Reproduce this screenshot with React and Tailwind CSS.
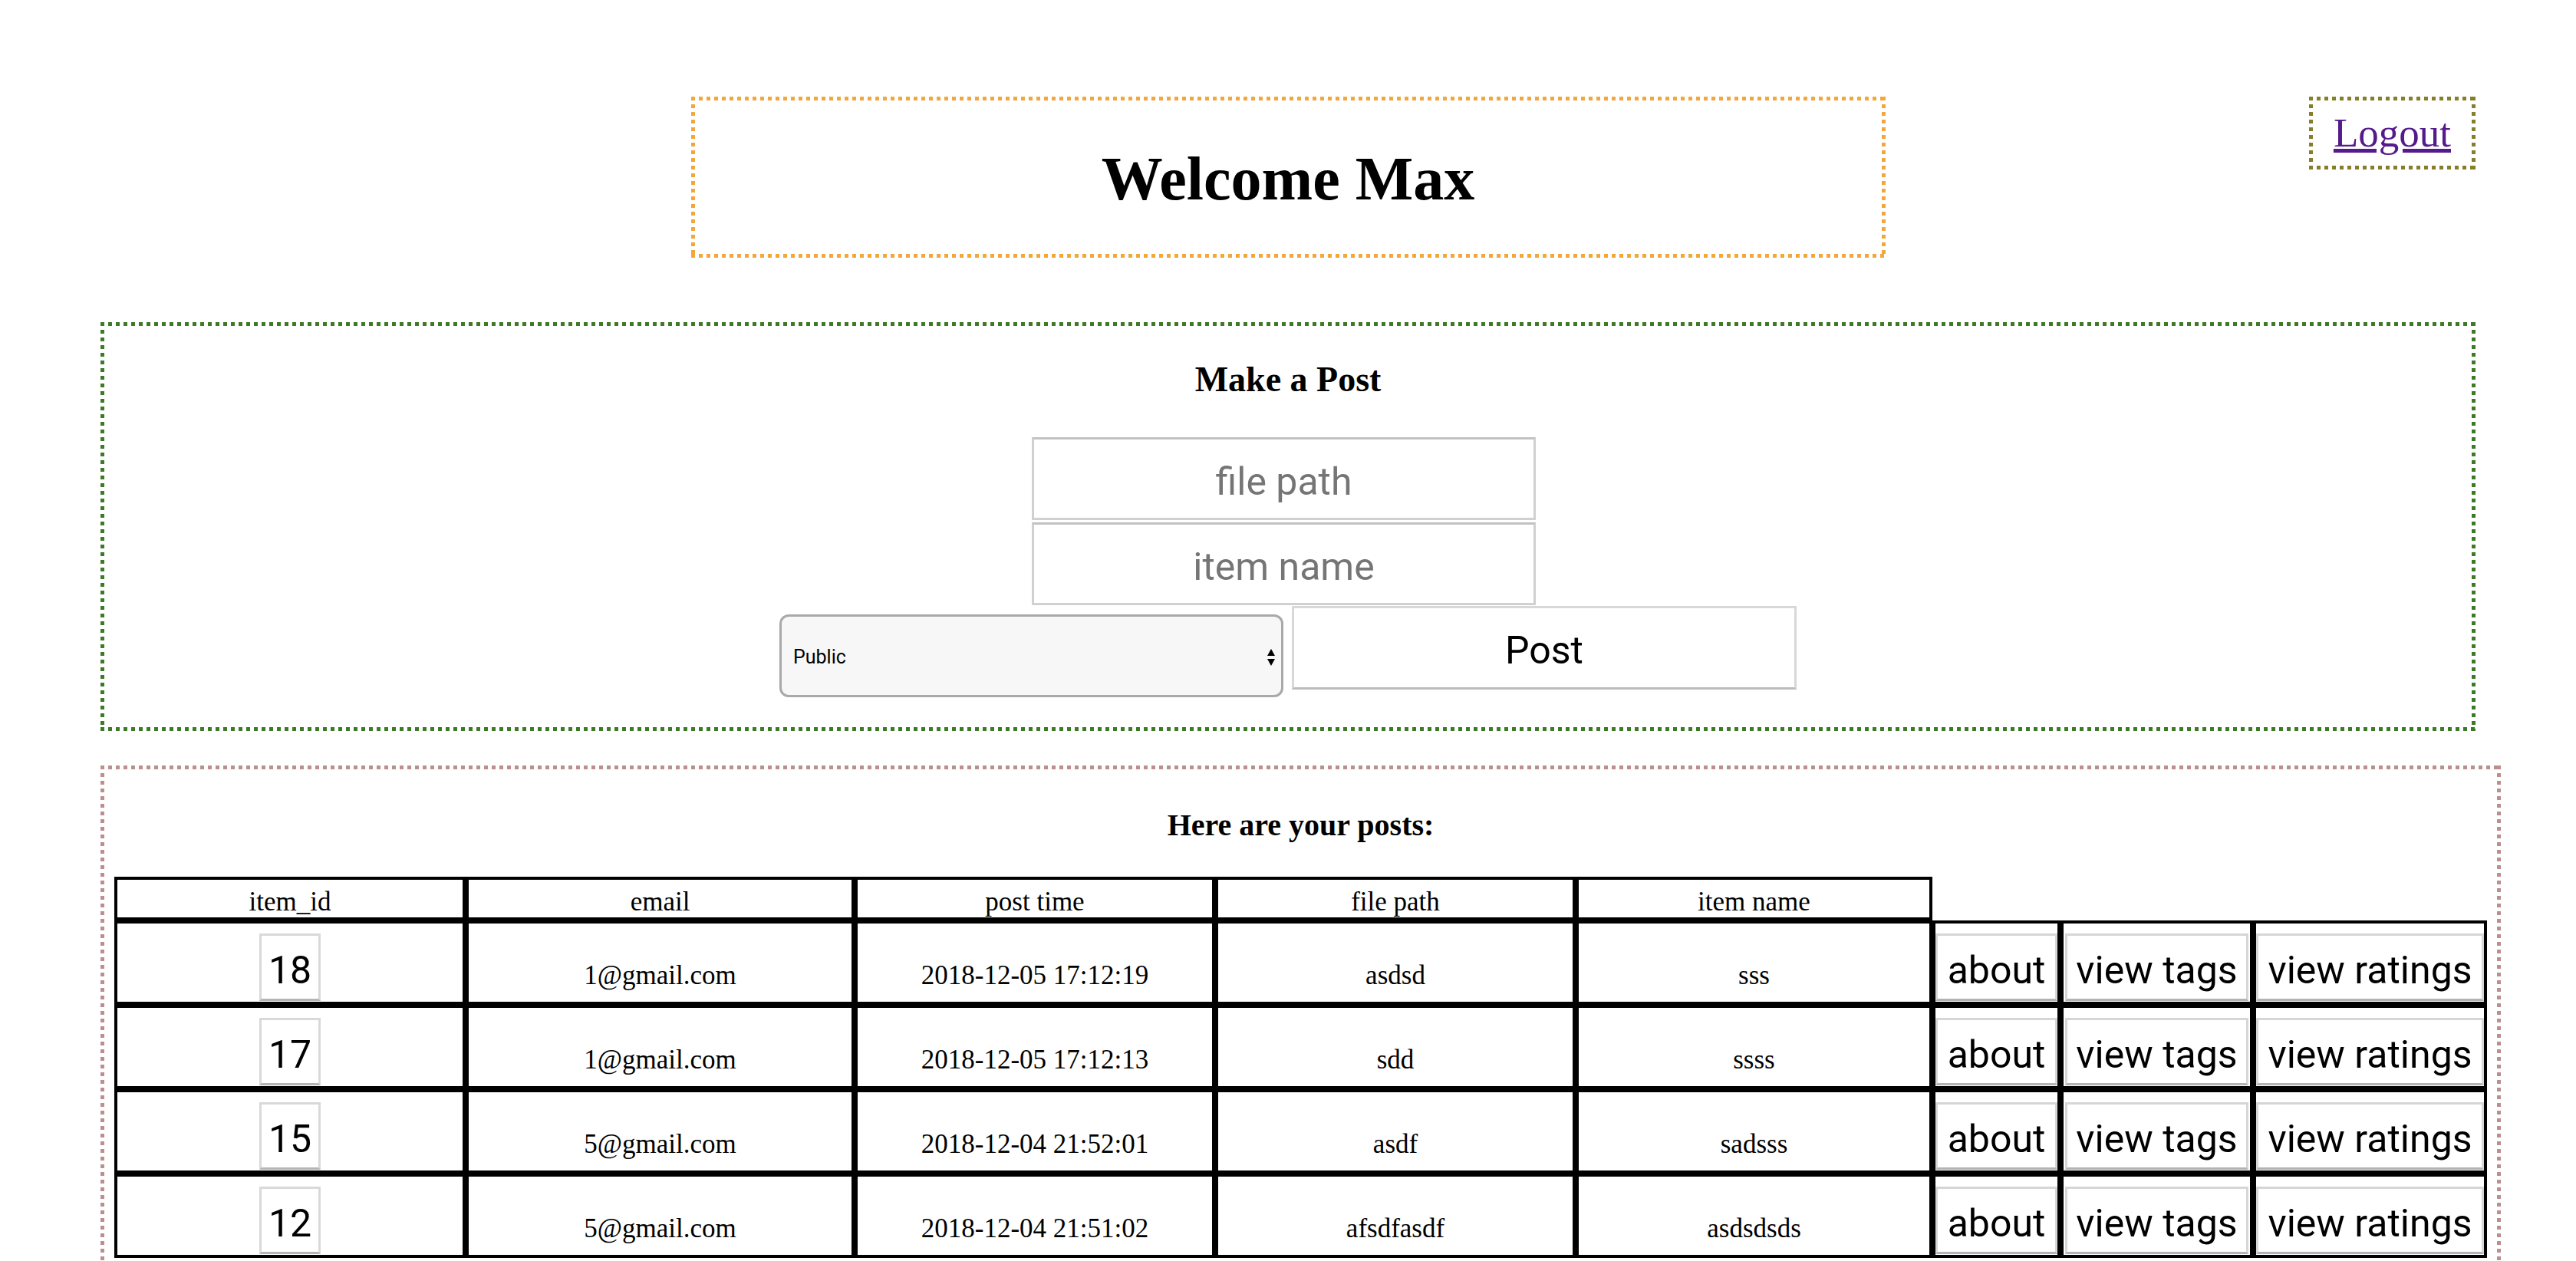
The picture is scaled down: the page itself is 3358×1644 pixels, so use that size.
import React from "react";

const posts = [
  { id: 18, email: "1@gmail.com", time: "2018-12-05 17:12:19", path: "asdsd", name: "sss" },
  { id: 17, email: "1@gmail.com", time: "2018-12-05 17:12:13", path: "sdd", name: "ssss" },
  { id: 15, email: "5@gmail.com", time: "2018-12-04 21:52:01", path: "asdf", name: "sadsss" },
  { id: 12, email: "5@gmail.com", time: "2018-12-04 21:51:02", path: "afsdfasdf", name: "asdsdsds" },
];

const headers = [
  { label: "item_id", w: "w-[458px]" },
  { label: "email", w: "w-[507px]" },
  { label: "post time", w: "w-[470px]" },
  { label: "file path", w: "w-[470px]" },
  { label: "item name", w: "w-[465px]" },
];

// square-dot borders (Chrome draws thick dotted borders as round dots)
const dotBase =
  "border-[5px] border-transparent bg-no-repeat bg-origin-border [background-size:100%_5px,100%_5px,5px_100%,5px_100%] [background-position:top_left,bottom_left,top_left,top_right]";
const orangeDots =
  "[background-image:repeating-linear-gradient(90deg,#f3a73a_0_5px,transparent_5px_10px),repeating-linear-gradient(90deg,#f3a73a_0_5px,transparent_5px_10px),repeating-linear-gradient(180deg,#f3a73a_0_5px,transparent_5px_10px),repeating-linear-gradient(180deg,#f3a73a_0_5px,transparent_5px_10px)]";
const oliveDots =
  "[background-image:repeating-linear-gradient(90deg,#857f2a_0_5px,transparent_5px_10px),repeating-linear-gradient(90deg,#857f2a_0_5px,transparent_5px_10px),repeating-linear-gradient(180deg,#857f2a_0_5px,transparent_5px_10px),repeating-linear-gradient(180deg,#857f2a_0_5px,transparent_5px_10px)]";
const greenDots =
  "[background-image:repeating-linear-gradient(90deg,#3c7a26_0_5px,transparent_5px_10px),repeating-linear-gradient(90deg,#3c7a26_0_5px,transparent_5px_10px),repeating-linear-gradient(180deg,#3c7a26_0_5px,transparent_5px_10px),repeating-linear-gradient(180deg,#3c7a26_0_5px,transparent_5px_10px)]";
const brownDots =
  "[background-image:repeating-linear-gradient(90deg,#bc8f8f_0_5px,transparent_5px_10px),repeating-linear-gradient(90deg,#bc8f8f_0_5px,transparent_5px_10px),repeating-linear-gradient(180deg,#bc8f8f_0_5px,transparent_5px_10px),repeating-linear-gradient(180deg,#bc8f8f_0_5px,transparent_5px_10px)]";

const PostRow = ({ post }) => {
  const textCell = "h-[110px] border-4 border-black pt-[48px] text-center text-[35px] leading-[40px]";
  const btnCell = "h-[110px] border-4 border-black pt-[13px]";
  const btn =
    "w-full h-[88px] pt-[8px] bg-white border-[3px] border-[#d6d6d6] border-b-[#b3b3b3] font-['Roboto'] text-[50px] text-black";

  return (
    <div className="flex">
      <div className="w-[458px] h-[110px] border-4 border-black pt-[13px] flex justify-center">
        <input
          type="text"
          readOnly
          value={post.id}
          className="w-[80px] h-[88px] pt-[8px] border-[3px] border-[#d9d9d9] border-b-[#b5b5b5] text-center font-['Roboto'] text-[50px] text-black outline-none"
        />
      </div>
      <div className={`w-[507px] ${textCell}`}>{post.email}</div>
      <div className={`w-[470px] ${textCell}`}>{post.time}</div>
      <div className={`w-[470px] ${textCell}`}>{post.path}</div>
      <div className={`w-[465px] ${textCell}`}>{post.name}</div>
      <div className={`w-[167px] ${btnCell}`}>
        <button className={btn}>about</button>
      </div>
      <div className={`w-[251px] ${btnCell} px-[2px]`}>
        <button className={btn}>view tags</button>
      </div>
      <div className={`w-[305px] ${btnCell}`}>
        <button className={btn}>view ratings</button>
      </div>
    </div>
  );
};

export default function App() {
  return (
    <div className="min-h-screen bg-white text-black font-['Liberation_Serif',serif] pt-[126px] px-[131px] pb-[60px]">
      {/* Header */}
      <div className="grid grid-cols-[1fr_auto_1fr] items-start">
        <div />
        <div className={`w-[1557px] ${dotBase} ${orangeDots} pt-[56px] pb-[52px] text-center`}>
          <h1 className="text-[80px] leading-[92px] font-bold">Welcome Max</h1>
        </div>
        <div className={`justify-self-end ${dotBase} ${oliveDots} px-[27px] py-[12px]`}>
          <a href="#" className="text-[53px] leading-[61px] text-[#551a8b] underline">
            Logout
          </a>
        </div>
      </div>

      {/* Make a Post */}
      <div className={`mt-[84px] ${dotBase} ${greenDots} pt-[43px] pb-[39px] flex flex-col items-center`}>
        <h3 className="text-[46px] leading-[53px] font-bold mb-[49px]">Make a Post</h3>
        <input
          type="text"
          placeholder="file path"
          className="mr-[11px] w-[657px] h-[108px] pt-[7px] border-[3px] border-[#d0d0d0] border-t-[#c2c2c2] text-center font-['Roboto'] text-[50px] placeholder:text-[#757575] outline-none"
        />
        <input
          type="text"
          placeholder="item name"
          className="mr-[11px] mt-[3px] w-[657px] h-[108px] pt-[7px] border-[3px] border-[#d0d0d0] border-t-[#c2c2c2] text-center font-['Roboto'] text-[50px] placeholder:text-[#757575] outline-none"
        />
        <div className="mt-[1px] flex items-start gap-[11px]">
          <div className="mt-[11px] w-[657px] h-[108px] rounded-[12px] border-[3px] border-[#a9a9a9] bg-[#f7f7f7] flex items-center justify-between pl-[15px] pr-[8px] pt-[3px] font-['Roboto'] text-[25px]">
            <span>Public</span>
            <svg width="10" height="22" viewBox="0 0 10 22">
              <polygon points="0,9 5,0 10,9" fill="#000" />
              <polygon points="0,13 10,13 5,22" fill="#000" />
            </svg>
          </div>
          <button className="w-[658px] h-[109px] pt-[7px] bg-white border-[3px] border-[#d8d8d8] border-b-[#bcbcbc] font-['Roboto'] text-[50px] text-black">
            Post
          </button>
        </div>
      </div>

      {/* Posts */}
      <div className={`mt-[45px] w-[3129px] ${dotBase} ${brownDots} px-[13px] pt-[50px] pb-[40px]`}>
        <h4 className="text-center text-[40px] leading-[46px] font-bold">Here are your posts:</h4>
        <div className="mt-[44px]">
          <div className="flex">
            {headers.map((h) => (
              <div
                key={h.label}
                className={`${h.w} h-[57px] border-4 border-black pt-[10px] text-center text-[35px] leading-[38px]`}
              >
                {h.label}
              </div>
            ))}
          </div>
          {posts.map((p) => (
            <PostRow key={p.id} post={p} />
          ))}
        </div>
      </div>
    </div>
  );
}
